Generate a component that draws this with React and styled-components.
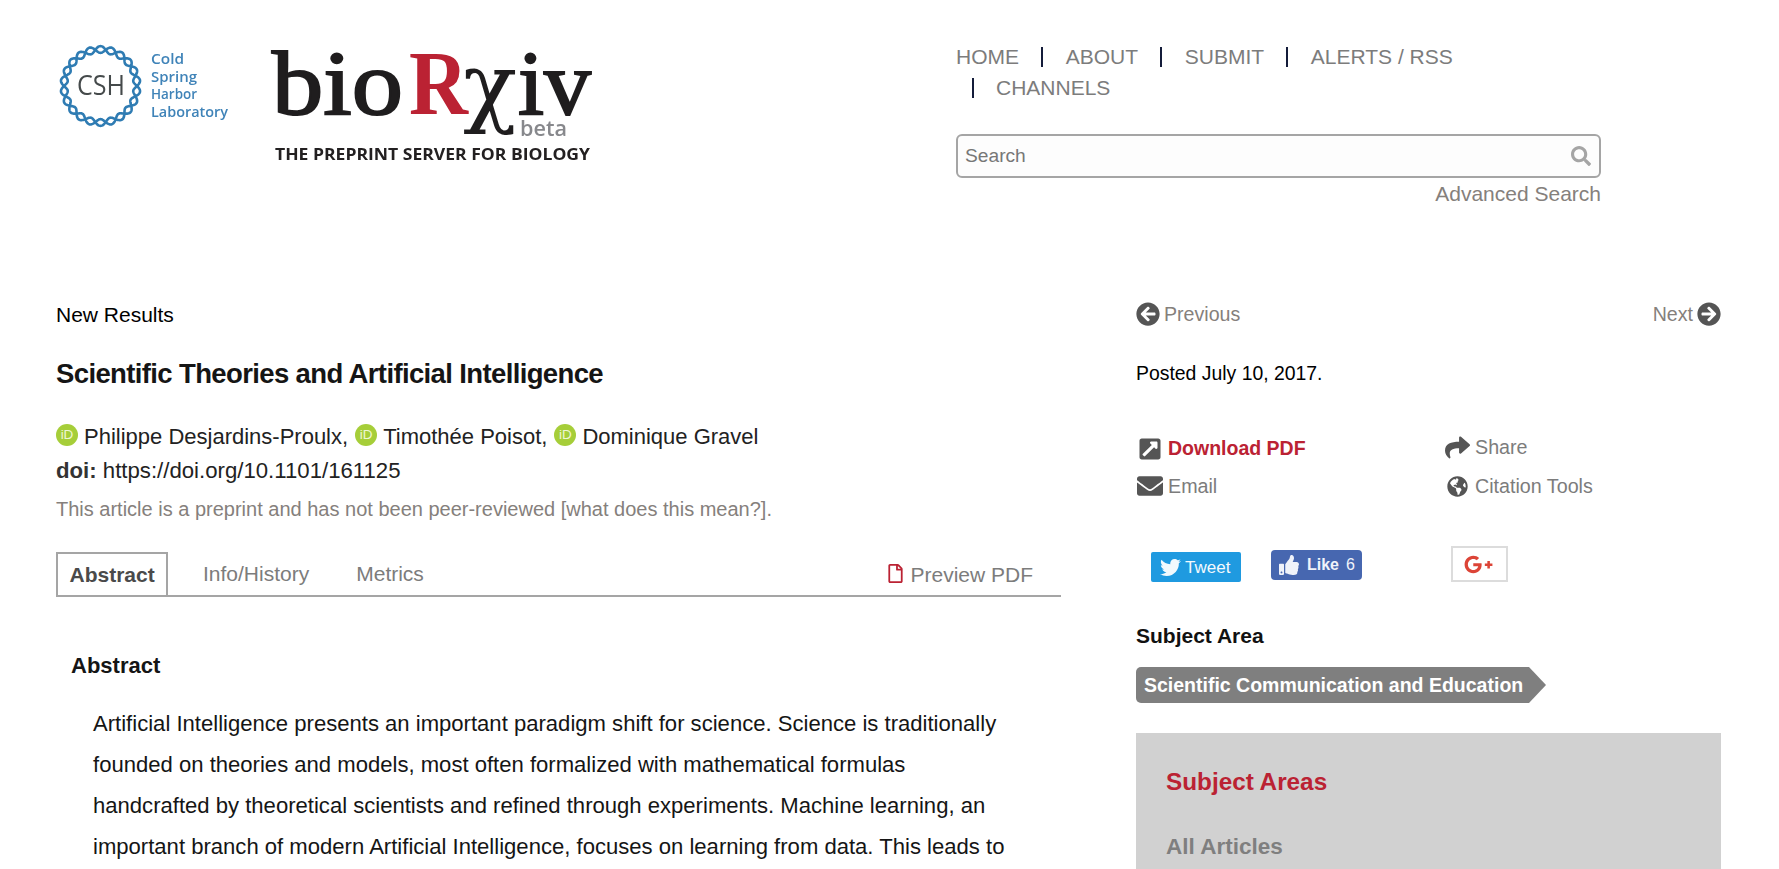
import React from "react";
import styled, { createGlobalStyle } from "styled-components";
import {
  FaArrowCircleLeft, FaArrowCircleRight, FaExternalLinkSquareAlt, FaShare, FaEnvelope,
  FaGlobeAmericas, FaTwitter, FaThumbsUp, FaGooglePlusG, FaSearch, FaRegFile,
} from "react-icons/fa";

const Global = createGlobalStyle`
  html, body { margin: 0; padding: 0; background: #fff; overflow: hidden; }
  body { font-family: "Liberation Sans", Arial, sans-serif; font-size: 21px; color: #111; }
  * { box-sizing: border-box; }
`;

const Page = styled.div`height: 869px; overflow: hidden;`;
const Header = styled.header`
  display: grid; grid-template-columns: 900px 645px; height: 300px; padding-left: 56px;
`;
const Logos = styled.svg`display: block; width: 560px; height: 150px; margin-top: 20px; filter: blur(0.35px);`;
const HeaderRight = styled.div`padding-top: 41px;`;
const Nav = styled.nav`display: flex; flex-wrap: wrap; column-gap: 6.7px; line-height: 31px;`;
const NavItem = styled.a`
  display: flex; align-items: center; color: #7c7c7c; font-size: 21px;
  ${(p) => p.$bar && `
    padding-left: 15.5px;
    &::before { content: ""; width: 2px; height: 20px; background: #141c3a; margin-right: 22.5px; }
  `}
`;
const SearchBox = styled.div`
  display: flex; align-items: center; justify-content: space-between; height: 44px; margin-top: 31px;
  padding: 0 8px 0 7px; border: 2px solid #a5a5a5; border-radius: 6px; background: #fdfdfd;
  color: #777; font-size: 19.2px; svg { color: #a5a5a5; font-size: 20px; }
`;
const Advanced = styled.div`text-align: right; color: #85807c; font-size: 21px; line-height: 30px; margin-top: 1px;`;

const Main = styled.main`display: grid; grid-template-columns: 1005px 585px; column-gap: 75px; padding-left: 56px;`;
const Left = styled.section``;
const Right = styled.aside``;
const Kicker = styled.div`line-height: 30px; color: #000;`;
const Title = styled.h1`margin: 27px 0 0; font-size: 27.5px; line-height: 34px; font-weight: 700; letter-spacing: -0.63px; color: #151515;`;
const Authors = styled.div`margin-top: 29px; line-height: 34px; font-size: 22px; display: flex; align-items: center; color: #222;`;
const Orcid = styled.span`
  display: inline-flex; align-items: center; justify-content: center; width: 22px; height: 22px;
  margin: -5px 6px 0 0; border-radius: 50%; background: #a6ce39; color: #eef6d4; font-size: 13.5px; font-weight: 400;
  &:not(:first-child) { margin-left: 7px; }
`;
const Doi = styled.div`line-height: 34px; font-size: 22.2px; color: #222; b { color: #333; }`;
const Note = styled.div`margin-top: 6px; line-height: 30px; font-size: 20px; color: #85807c;`;
const Tabs = styled.div`
  display: flex; align-items: stretch; height: 45px; margin-top: 28px; width: 1005px;
  border-bottom: 2px solid #a5a5a5;
`;
const Tab = styled.div`
  display: flex; align-items: center; color: ${(p) => (p.$active ? "#4a4a4a" : "#7c7c7c")};
  font-weight: ${(p) => (p.$active ? 700 : 400)};
  ${(p) => p.$active
    ? `border: 2px solid #a5a5a5; border-bottom: none; padding: 0 11.5px 1px; width: 112px; margin-bottom: -2px;`
    : `margin-left: ${p.$gap}px; padding-top: 1px;`}
`;
const Preview = styled.div`
  margin-left: auto; margin-right: 28px; padding-top: 2px; display: flex; align-items: center; gap: 5px; color: #7c7c7c;
  svg { color: #bb2233; font-size: 19px; margin-top: -3px; }
`;
const AbstractHead = styled.h2`margin: 54px 0 0 15px; font-size: 22px; line-height: 30px; font-weight: 700; color: #151515;`;
const Para = styled.p`margin: 21.5px 0 0 37px; width: 930px; line-height: 41px; font-size: 22.08px; color: #151515;`;

const Pager = styled.div`display: flex; justify-content: space-between; height: 28px; align-items: center; font-size: 19.6px; color: #85807c;`;
const PagerLink = styled.span`display: flex; align-items: center; gap: 4px; svg { color: #555; font-size: 24px; }`;
const Posted = styled.div`margin-top: 30px; line-height: 30px; font-size: 19.4px; color: #000;`;
const Actions = styled.div`display: grid; grid-template-columns: 308px 1fr; grid-auto-rows: 38.5px; margin-top: 40.5px;`;
const Action = styled.div`
  display: flex; align-items: center; padding-top: ${(p) => (p.$red ? "2px" : "0")}; font-size: ${(p) => (p.$red ? "19.5px" : "19.7px")};
  color: ${(p) => (p.$red ? "#bb2233" : "#7c7c7c")};
  font-weight: ${(p) => (p.$red ? 700 : 400)};
`;
const ActionIcon = styled.span`
  display: inline-flex; justify-content: center; width: ${(p) => p.$width || 31}px; padding-right: 5px; color: #555; font-size: ${(p) => p.$size || 24}px;
`;
const Social = styled.div`display: flex; align-items: flex-start; height: 36px; margin-top: 40.5px;`;
const Tweet = styled.div`
  display: flex; align-items: center; gap: 4px; width: 90px; height: 30px; margin: 6px 0 0 15px; padding: 1px 0 0 9px;
  background: #1f9ae0; color: #f2f9fd; border-radius: 2px; font-size: 17px;
  svg { font-size: 21px; }
`;
const Like = styled.div`
  display: flex; align-items: center; width: 91px; height: 30px; margin: 4px 0 0 30px; padding: 0 0 1px 8px;
  background: #4767b0; color: #f0f3fa; border-radius: 4px; font-size: 16px;
  svg { font-size: 20px; margin-right: 8px; } b { margin-right: 7px; }
`;
const Plus = styled.div`
  display: flex; align-items: center; justify-content: center; width: 57px; height: 36px; margin-left: 89px;
  border: 2px solid #dcdcdc; background: #fff; color: #dc4437; svg { font-size: 29px; margin-left: -2px; }
`;
const SubjectHead = styled.h3`margin: 39px 0 0; font-size: 21px; line-height: 30px; font-weight: 700; color: #111;`;
const TagRow = styled.div`display: flex; margin-top: 16px;`;
const Tag = styled.div`
  position: relative; display: flex; align-items: center; width: 393px; height: 36px; padding-left: 8px;
  border-radius: 5px 0 0 5px; background: #7f7f7f; color: #fff; font-size: 19.5px; font-weight: 700; white-space: nowrap;
  &::after { content: ""; position: absolute; left: 100%; top: 0; border-style: solid; border-width: 18px 0 18px 17px; border-color: transparent transparent transparent #7f7f7f; }
`;
const Panel = styled.div`margin-top: 30px; height: 300px; background: #d1d1d1; padding: 32px 30px;`;
const PanelTitle = styled.div`font-size: 24.3px; line-height: 34px; font-weight: 700; color: #bb2233;`;
const PanelItem = styled.div`margin-top: 31px; font-size: 22.5px; line-height: 34px; font-weight: 700; color: #7f7f7f;`;

function helix(cx, cy, R, a, n, phase) {
  let d = "";
  for (let i = 0; i <= 360; i++) {
    const t = (i / 360) * Math.PI * 2;
    const r = R + a * Math.sin(n * t + phase);
    d += `${i ? "L" : "M"}${(cx + r * Math.cos(t)).toFixed(2)} ${(cy + r * Math.sin(t)).toFixed(2)}`;
  }
  return d + "Z";
}

const Logo = () => (
  <Logos viewBox="56 20 560 150">
    <path d={helix(100.5, 86, 36.5, 3.4, 11, 0)} fill="none" stroke="#2f7cb3" strokeWidth="2.6" />
    <path d={helix(100.5, 86, 36.5, 3.4, 11, Math.PI)} fill="none" stroke="#2f7cb3" strokeWidth="2.6" />
    <text x="77" y="95" fontFamily="Open Sans" fontSize="27" fill="#454a4b" textLength="48" lengthAdjust="spacingAndGlyphs">CSH</text>
    <g fontFamily="Open Sans" fontSize="14.5" fontWeight="600" fill="#3f83b8">
      <text x="151" y="64" textLength="33" lengthAdjust="spacingAndGlyphs">Cold</text>
      <text x="151" y="82" textLength="46" lengthAdjust="spacingAndGlyphs">Spring</text>
      <text x="151" y="99" textLength="46" lengthAdjust="spacingAndGlyphs">Harbor</text>
      <text x="151" y="117" textLength="77" lengthAdjust="spacingAndGlyphs">Laboratory</text>
    </g>
    <g fontFamily="Liberation Serif" fontSize="92" fill="#1f1d1e">
      <text x="272" y="114" textLength="131" lengthAdjust="spacingAndGlyphs" stroke="#1f1d1e" strokeWidth="2">bio</text>
      <text x="409" y="114" textLength="59" lengthAdjust="spacingAndGlyphs" fontWeight="700" fill="#bb2233">R</text>
      <text x="463" y="116" fontFamily="DejaVu Serif" fontSize="88" textLength="54" lengthAdjust="spacingAndGlyphs">χ</text>
      <text x="518" y="114" textLength="73" lengthAdjust="spacingAndGlyphs" stroke="#1f1d1e" strokeWidth="2">iv</text>
    </g>
    <text x="520" y="136" fontFamily="Open Sans" fontSize="21" fontWeight="600" fill="#87888c" textLength="47" lengthAdjust="spacingAndGlyphs">beta</text>
    <text x="275" y="160" fontFamily="Open Sans" fontSize="15.5" fontWeight="700" fill="#232021" textLength="315" lengthAdjust="spacingAndGlyphs">THE PREPRINT SERVER FOR BIOLOGY</text>
  </Logos>
);

export default function App() {
  return (
    <Page>
      <Global />
      <Header>
        <div><Logo /></div>
        <HeaderRight>
          <Nav>
            <NavItem>HOME</NavItem>
            <NavItem $bar>ABOUT</NavItem>
            <NavItem $bar>SUBMIT</NavItem>
            <NavItem $bar>ALERTS / RSS</NavItem>
            <NavItem $bar>CHANNELS</NavItem>
          </Nav>
          <SearchBox>Search<FaSearch /></SearchBox>
          <Advanced>Advanced Search</Advanced>
        </HeaderRight>
      </Header>
      <Main>
        <Left>
          <Kicker>New Results</Kicker>
          <Title>Scientific Theories and Artificial Intelligence</Title>
          <Authors>
            <Orcid>iD</Orcid>Philippe Desjardins-Proulx,
            <Orcid>iD</Orcid>Timothée Poisot,
            <Orcid>iD</Orcid>Dominique Gravel
          </Authors>
          <Doi><b>doi:</b> https://doi.org/10.1101/161125</Doi>
          <Note>This article is a preprint and has not been peer-reviewed [what does this mean?].</Note>
          <Tabs>
            <Tab $active>Abstract</Tab>
            <Tab $gap={35}>Info/History</Tab>
            <Tab $gap={47}>Metrics</Tab>
            <Preview><FaRegFile />Preview PDF</Preview>
          </Tabs>
          <AbstractHead>Abstract</AbstractHead>
          <Para>
            Artificial Intelligence presents an important paradigm shift for science. Science is traditionally
            founded on theories and models, most often formalized with mathematical formulas
            handcrafted by theoretical scientists and refined through experiments. Machine learning, an
            important branch of modern Artificial Intelligence, focuses on learning from data. This leads to
          </Para>
        </Left>
        <Right>
          <Pager>
            <PagerLink><FaArrowCircleLeft />Previous</PagerLink>
            <PagerLink>Next<FaArrowCircleRight /></PagerLink>
          </Pager>
          <Posted>Posted July 10, 2017.</Posted>
          <Actions>
            <Action $red><ActionIcon $width={32}><FaExternalLinkSquareAlt /></ActionIcon>Download PDF</Action>
            <Action><ActionIcon $size={25}><FaShare /></ActionIcon>Share</Action>
            <Action><ActionIcon $size={26} $width={32}><FaEnvelope /></ActionIcon>Email</Action>
            <Action><ActionIcon $size={21}><FaGlobeAmericas /></ActionIcon>Citation Tools</Action>
          </Actions>
          <Social>
            <Tweet><FaTwitter />Tweet</Tweet>
            <Like><FaThumbsUp /><b>Like</b>6</Like>
            <Plus><FaGooglePlusG /></Plus>
          </Social>
          <SubjectHead>Subject Area</SubjectHead>
          <TagRow><Tag>Scientific Communication and Education</Tag></TagRow>
          <Panel>
            <PanelTitle>Subject Areas</PanelTitle>
            <PanelItem>All Articles</PanelItem>
          </Panel>
        </Right>
      </Main>
    </Page>
  );
}
